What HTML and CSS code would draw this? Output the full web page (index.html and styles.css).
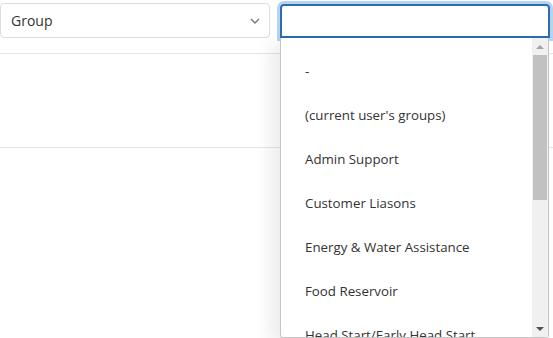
FILE: index.html
```html
<!DOCTYPE html>
<html lang="en">

<head>
    <meta charset="UTF-8">
    <title>Group filter</title>
    <link rel="stylesheet" href="styles.css">
</head>

<body>
    <!-- filter bar -->
    <div class="filters">
        <div class="select">
            <span>Group</span>
            <svg class="chevron" width="10" height="6" viewBox="0 0 10 6">
                <path d="M1 1 L5 5 L9 1" fill="none" stroke="#777" stroke-width="1.4"/>
            </svg>
        </div>
        <div class="combo">
            <div class="search"></div>
            <!-- open dropdown -->
            <div class="dropdown">
                <ul class="options">
                    <li>-</li>
                    <li>(current user's groups)</li>
                    <li>Admin Support</li>
                    <li>Customer Liasons</li>
                    <li>Energy &amp; Water Assistance</li>
                    <li>Food Reservoir</li>
                    <li>Head Start/Early Head Start</li>
                </ul>
                <div class="scrollbar">
                    <div class="arrow up"></div>
                    <div class="track"><div class="thumb"></div></div>
                    <div class="arrow down"></div>
                </div>
            </div>
        </div>
    </div>
    <!-- empty result area -->
    <div class="results"></div>
</body>

</html>
```

FILE: styles.css
```css
/* page */
html,
body {
    height: 100%;
}

body {
    margin: 0;
    font-family: "Open Sans", "Noto Sans", sans-serif;
    font-size: 13.3px;
    color: #333;
    background: #fff;
    overflow: hidden;
}

.filters {
    display: flex;
    gap: 10px;
    padding-top: 3px;
}

.select {
    width: 270px;
    height: 35px;
    box-sizing: border-box;
    border: 1px solid #dcdcdc;
    border-radius: 4px;
    display: flex;
    align-items: center;
    justify-content: space-between;
    padding: 0 9px 0 10px;
    font-size: 14px;
}

.combo {
    position: relative;
    width: 270px;
}

.search {
    height: 34px;
    box-sizing: border-box;
    border: 2px solid #2a6db5;
    border-radius: 4px 4px 0 0;
    box-shadow: 0 0 0 3px #b7d3ee;
    margin-top: 1px;
}

.dropdown {
    position: absolute;
    top: 35px;
    left: 0;
    width: 269px;
    height: 300px;
    box-sizing: border-box;
    border: 1px solid #c4c4c4;
    border-top: none;
    border-radius: 0 0 3px 3px;
    background: #fff;
    box-shadow: -10px 6px 18px rgba(0, 0, 0, 0.08);
    display: flex;
    z-index: 2;
}

.options {
    list-style: none;
    margin: 0;
    padding: 11px 0 0 0;
    flex: 1;
    overflow: hidden;
}

.options li {
    height: 44px;
    line-height: 44px;
    padding-left: 24px;
    white-space: nowrap;
}

.scrollbar {
    width: 16px;
    background: #f0f0f0;
    display: flex;
    flex-direction: column;
}

.arrow {
    height: 17px;
    display: flex;
    align-items: center;
    justify-content: center;
}

.arrow::before {
    content: "";
    border-left: 4px solid transparent;
    border-right: 4px solid transparent;
}

.arrow.up::before {
    border-bottom: 4px solid #a3a3a3;
}

.arrow.down::before {
    border-top: 4px solid #505050;
}

.track {
    flex: 1;
    padding: 0 1px;
}

.thumb {
    height: 145px;
    background: #c1c1c1;
}

.results {
    margin-top: 15px;
    height: 93px;
    border-top: 1px solid #e6e6e6;
    border-bottom: 1px solid #e6e6e6;
}
```
